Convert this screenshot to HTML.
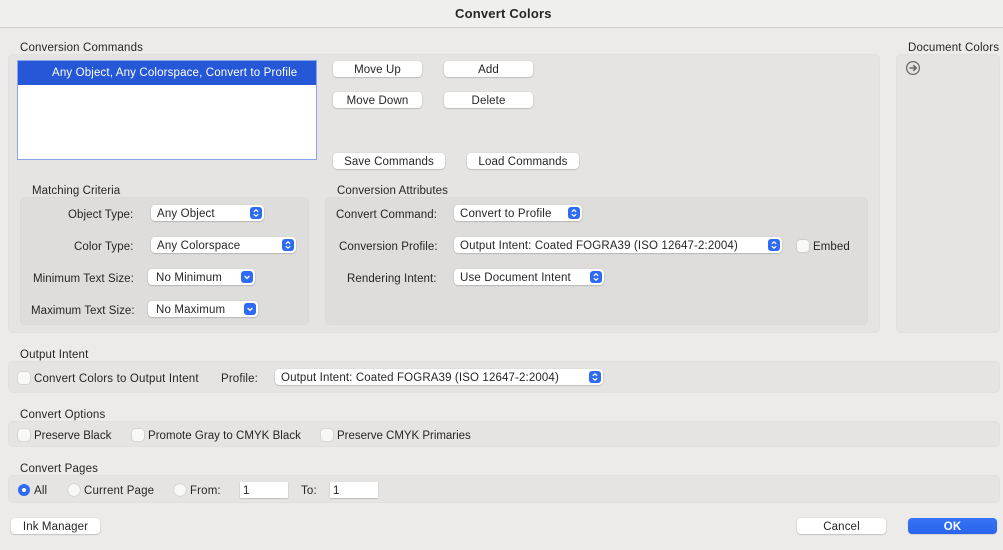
<!DOCTYPE html>
<html><head><meta charset="utf-8"><style>
html,body{margin:0;padding:0;width:1003px;height:550px;overflow:hidden;background:#ecebe9}
body{position:relative;font-family:"Liberation Sans",sans-serif;font-size:11.5px;letter-spacing:.15px;color:#262626;filter:blur(.25px)}
.a,.t,.p,.b,.s,.c,.r,.i{position:absolute;box-sizing:border-box}
.t{white-space:nowrap;line-height:14px;margin-top:1px}
.l{letter-spacing:.08px}
.p{background:#e5e4e2;border:1px solid #e1e0de;border-radius:5px}
.d{background:#dedddb;border-color:#dad9d7}
.b{height:16px;background:#fff;border-radius:4px;box-shadow:0 .5px 1.5px rgba(0,0,0,.3);text-align:center;line-height:19px;white-space:nowrap;letter-spacing:.12px}
.s{height:16px;background:#fff;border-radius:4px;box-shadow:0 .5px 1.5px rgba(0,0,0,.3);line-height:19px;padding-left:6px;white-space:nowrap}
.s svg{position:absolute;right:2px;top:2px}
.c{width:12px;height:12px;background:#f8f8f7;border-radius:3px;box-shadow:0 0 1px rgba(0,0,0,.4)}
.r{width:12px;height:12px;background:#f8f8f7;border-radius:50%;box-shadow:0 0 1px rgba(0,0,0,.4)}
.i{width:48px;height:16px;background:#fff;box-shadow:0 .5px 1px rgba(0,0,0,.3);padding-left:3px;line-height:18px}
</style></head><body>
<svg width="0" height="0" style="position:absolute"><defs>
<symbol id="ud" viewBox="0 0 12 12"><rect width="12" height="12" rx="3" fill="#2f6bf2"/><path d="M3.8 4.8 6 2.8 8.2 4.8M3.8 7.2 6 9.2 8.2 7.2" fill="none" stroke="#fff" stroke-width="1.2"/></symbol>
<symbol id="dn" viewBox="0 0 12 12"><rect width="12" height="12" rx="3" fill="#2f6bf2"/><path d="M3.6 5 6 7.4 8.4 5" fill="none" stroke="#fff" stroke-width="1.3"/></symbol>
</defs></svg>

<div class="a" style="left:0;top:0;width:1003px;height:28px;background:#efefed;border-bottom:1px solid #cfcfcd"></div>
<div class="t" style="left:455px;top:6px;font-weight:bold;font-size:13px;letter-spacing:.2px">Convert Colors</div>

<div class="t" style="left:20px;top:40px">Conversion Commands</div>
<div class="t" style="left:908px;top:40px">Document Colors</div>

<div class="p" style="left:8px;top:54px;width:872px;height:279px"></div>
<div class="p" style="left:896px;top:54px;width:104px;height:279px"></div>
<svg class="a" style="left:905px;top:60px" width="16" height="16" viewBox="0 0 16 16"><circle cx="8" cy="8" r="6.4" fill="#e5e4e2" stroke="#666" stroke-width="1.2"/><path d="M4.4 8H11M8.3 5.2 11.2 8 8.3 10.8" fill="none" stroke="#666" stroke-width="1.6"/></svg>

<div class="a" style="left:17px;top:60px;width:300px;height:100px;background:#fff;border:1px solid #86a5ea"></div>
<div class="a" style="left:18px;top:61px;width:298px;height:24px;background:#2557d6"></div>
<div class="t" style="left:52px;top:65px;color:#fff">Any Object, Any Colorspace, Convert to Profile</div>

<div class="b" style="left:333px;top:61px;width:89px">Move Up</div>
<div class="b" style="left:444px;top:61px;width:89px">Add</div>
<div class="b" style="left:333px;top:92px;width:89px">Move Down</div>
<div class="b" style="left:444px;top:92px;width:89px">Delete</div>
<div class="b" style="left:333px;top:153px;width:112px">Save Commands</div>
<div class="b" style="left:467px;top:153px;width:112px">Load Commands</div>

<div class="t l" style="left:32px;top:183px">Matching Criteria</div>
<div class="t l" style="left:337px;top:183px">Conversion Attributes</div>
<div class="p d" style="left:20px;top:197px;width:289px;height:128px"></div>
<div class="p d" style="left:325px;top:197px;width:543px;height:128px"></div>

<div class="t l" style="left:68px;top:207px">Object Type:</div>
<div class="s" style="left:151px;top:205px;width:113px">Any Object<svg width="12" height="12"><use href="#ud"/></svg></div>
<div class="t l" style="left:74px;top:239px">Color Type:</div>
<div class="s" style="left:151px;top:237px;width:145px">Any Colorspace<svg width="12" height="12"><use href="#ud"/></svg></div>
<div class="t l" style="left:33px;top:271px">Minimum Text Size:</div>
<div class="s" style="left:148px;top:269px;width:107px;padding-left:8px">No Minimum<svg width="12" height="12"><use href="#dn"/></svg></div>
<div class="t" style="left:31px;top:303px;letter-spacing:.05px">Maximum Text Size:</div>
<div class="s" style="left:148px;top:301px;width:110px;padding-left:8px">No Maximum<svg width="12" height="12"><use href="#dn"/></svg></div>

<div class="t l" style="left:336px;top:207px">Convert Command:</div>
<div class="s" style="left:454px;top:205px;width:128px">Convert to Profile<svg width="12" height="12"><use href="#ud"/></svg></div>
<div class="t l" style="left:339px;top:239px">Conversion Profile:</div>
<div class="s" style="left:454px;top:237px;width:328px;letter-spacing:.13px">Output Intent: Coated FOGRA39 (ISO 12647-2:2004)<svg width="12" height="12"><use href="#ud"/></svg></div>
<div class="c" style="left:797px;top:240px"></div>
<div class="t l" style="left:813px;top:239px">Embed</div>
<div class="t l" style="left:347px;top:271px">Rendering Intent:</div>
<div class="s" style="left:454px;top:269px;width:150px">Use Document Intent<svg width="12" height="12"><use href="#ud"/></svg></div>

<div class="t" style="left:20px;top:347px">Output Intent</div>
<div class="p" style="left:8px;top:361px;width:992px;height:32px"></div>
<div class="c" style="left:18px;top:372px"></div>
<div class="t" style="left:34px;top:371px;letter-spacing:.18px">Convert Colors to Output Intent</div>
<div class="t" style="left:221px;top:371px">Profile:</div>
<div class="s" style="left:275px;top:369px;width:328px;letter-spacing:.13px">Output Intent: Coated FOGRA39 (ISO 12647-2:2004)<svg width="12" height="12"><use href="#ud"/></svg></div>

<div class="t" style="left:20px;top:407px">Convert Options</div>
<div class="p" style="left:8px;top:421px;width:992px;height:26px"></div>
<div class="c" style="left:18px;top:429px"></div>
<div class="t" style="left:34px;top:428px;letter-spacing:0">Preserve Black</div>
<div class="c" style="left:132px;top:429px"></div>
<div class="t" style="left:148px;top:428px;letter-spacing:.03px">Promote Gray to CMYK Black</div>
<div class="c" style="left:321px;top:429px"></div>
<div class="t" style="left:337px;top:428px;letter-spacing:-.02px">Preserve CMYK Primaries</div>

<div class="t" style="left:20px;top:461px">Convert Pages</div>
<div class="p" style="left:8px;top:475px;width:992px;height:28px"></div>
<div class="r" style="left:18px;top:484px;background:#2f6bf2;box-shadow:none"></div>
<div class="a" style="left:22px;top:488px;width:4px;height:4px;border-radius:50%;background:#fff"></div>
<div class="t" style="left:34px;top:483px">All</div>
<div class="r" style="left:68px;top:484px"></div>
<div class="t" style="left:84px;top:483px">Current Page</div>
<div class="r" style="left:174px;top:484px"></div>
<div class="t" style="left:190px;top:483px">From:</div>
<div class="i" style="left:240px;top:482px">1</div>
<div class="t" style="left:301px;top:483px">To:</div>
<div class="i" style="left:330px;top:482px">1</div>

<div class="b" style="left:11px;top:518px;width:89px">Ink Manager</div>
<div class="b" style="left:797px;top:518px;width:89px">Cancel</div>
<div class="b" style="left:908px;top:518px;width:89px;background:linear-gradient(#3474f6,#2a63ea);color:#fff;font-weight:bold;box-shadow:0 .5px 1px rgba(0,0,0,.2)">OK</div>
</body></html>
